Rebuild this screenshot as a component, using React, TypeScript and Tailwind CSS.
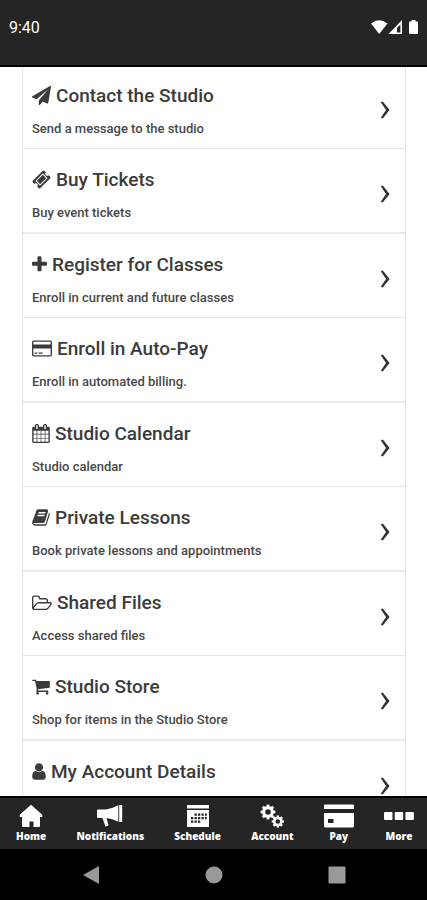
import type { ReactNode } from "react";

// --- MENU ICONS (1792 unit grid) ---
const PATHS = {
  plane:
    "M1764 11q33 24 27 64l-256 1536q-5 29-32 45-14 8-31 8-11 0-24-5l-453-185-242 295q-18 23-49 23-13 0-22-4-19-7-30.5-23.5t-11.5-36.5v-349l864-1059-1069 925-395-162q-37-14-40-55-2-40 32-59l1664-960q15-9 32-9 20 0 36 11z",
  ticket:
    "M1024 452l316 316-572 572-316-316zm-211 979l618-618q19-19 19-45t-19-45l-362-362q-18-18-45-18t-45 18l-618 618q-19 19-19 45t19 45l362 362q18 18 45 18t45-18zm889-637l-907 908q-37 37-90.5 37t-90.5-37l-126-126q56-56 56-136t-56-136-136-56-136 56l-125-126q-37-37-37-90.5t37-90.5l907-906q37-37 90.5-37t90.5 37l125 125q-56 56-56 136t56 136 136 56 136-56l126 125q37 37 37 90.5t-37 90.5z",
  plus:
    "M1600 736v192q0 40-28 68t-68 28h-416v416q0 40-28 68t-68 28h-192q-40 0-68-28t-28-68v-416h-416q-40 0-68-28t-28-68v-192q0-40 28-68t68-28h416v-416q0-40 28-68t68-28h192q40 0 68 28t28 68v416h416q40 0 68 28t28 68z",
  card:
    "M1760 128q66 0 113 47t47 113v1216q0 66-47 113t-113 47h-1600q-66 0-113-47t-47-113v-1216q0-66 47-113t113-47h1600zm-1600 128q-13 0-22.5 9.5t-9.5 22.5v224h1664v-224q0-13-9.5-22.5t-22.5-9.5h-1600zm1600 1280q13 0 22.5-9.5t9.5-22.5v-608h-1664v608q0 13 9.5 22.5t22.5 9.5h1600zm-1504-128v-128h256v128h-256zm384 0v-128h384v128h-384z",
  calendar:
    "M192 1664h288v-288h-288v288zm352 0h320v-288h-320v288zm-352-352h288v-320h-288v320zm352 0h320v-320h-320v320zm-352-384h288v-288h-288v288zm736 736h320v-288h-320v288zm-384-736h320v-288h-320v288zm768 736h288v-288h-288v288zm-384-352h320v-320h-320v320zm-352-864v-288q0-13-9.5-22.5t-22.5-9.5h-64q-13 0-22.5 9.5t-9.5 22.5v288q0 13 9.5 22.5t22.5 9.5h64q13 0 22.5-9.5t9.5-22.5zm736 864h288v-320h-288v320zm-384-384h320v-288h-320v288zm384 0h288v-288h-288v288zm32-480v-288q0-13-9.5-22.5t-22.5-9.5h-64q-13 0-22.5 9.5t-9.5 22.5v288q0 13 9.5 22.5t22.5 9.5h64q13 0 22.5-9.5t9.5-22.5zm384-64v1280q0 52-38 90t-90 38h-1408q-52 0-90-38t-38-90v-1280q0-52 38-90t90-38h128v-96q0-66 47-113t113-47h64q66 0 113 47t47 113v96h384v-96q0-66 47-113t113-47h64q66 0 113 47t47 113v96h128q52 0 90 38t38 90z",
  book:
    "M1703 478q40 57 18 129l-275 906q-19 64-76.5 107.5t-122.5 43.5h-923q-77 0-148.5-53.5t-99.5-131.5q-24-67-2-127 0-4 3-27t4-37q1-8-3-21.5t-3-19.5q2-11 8-21t16.5-23.5 16.5-23.5q23-38 45-91.5t30-91.5q3-10 .5-30t-.5-28q3-11 17-28t17-23q21-36 42-92t25-90q1-9-2.5-32t.5-28q4-13 22-30.5t22-22.5q19-26 42.5-84.5t27.5-96.5q1-8-3-25.5t-2-26.5q2-8 9-18t18-23 17-21q8-12 16.5-30.5t15-35 16-36 19.5-32 26.5-23.5 36-11.5 47.5 5.5l-1 3q38-9 51-9h761q74 0 114 56t18 130l-274 906q-36 119-71.5 153.5t-128.5 34.5h-869q-27 0-38 15-11 16-1 43 24 70 144 70h923q29 0 56-15.5t35-41.5l300-987q7-22 5-57 38 15 59 43zm-1064 2q-4 13 2 22.5t20 9.5h608q13 0 25.5-9.5t16.5-22.5l21-64q4-13-2-22.5t-20-9.5h-608q-13 0-25.5 9.5t-16.5 22.5zm-83 256q-4 13 2 22.5t20 9.5h608q13 0 25.5-9.5t16.5-22.5l21-64q4-13-2-22.5t-20-9.5h-608q-13 0-25.5 9.5t-16.5 22.5z",
  folder:
    "M1781 1017q0-35-53-35h-1088q-40 0-85.5 21.5t-71.5 52.5l-294 363q-18 24-18 40 0 35 53 35h1088q40 0 86-22t71-53l294-363q18-22 18-39zm-1141-163h768v-160q0-40-28-68t-68-28h-576q-40 0-68-28t-28-68v-64q0-40-28-68t-68-28h-320q-40 0-68 28t-28 68v853l256-315q44-53 116-87.5t140-34.5zm1269 163q0 62-46 120l-295 363q-43 53-116 87.5t-140 34.5h-1088q-92 0-158-66t-66-158v-960q0-92 66-158t158-66h320q92 0 158 66t66 158v32h544q92 0 158 66t66 158v160h192q54 0 99 24.5t67 70.5q15 32 15 68z",
  cart:
    "M704 1536q0 52-38 90t-90 38-90-38-38-90 38-90 90-38 90 38 38 90zm896 0q0 52-38 90t-90 38-90-38-38-90 38-90 90-38 90 38 38 90zm128-1088v512q0 24-16.5 42.5t-40.5 21.5l-1044 122q13 60 13 70 0 16-24 64h920q26 0 45 19t19 45-19 45-45 19h-1024q-26 0-45-19t-19-45q0-11 8-31.5t16-36 21.5-40 15.5-29.5l-177-823h-204q-26 0-45-19t-19-45 19-45 45-19h256q16 0 28.5 6.5t19.5 15.5 13 24.5 8 26 5.5 29.5 4.5 26h1201q26 0 45 19t19 45z",
  user:
    "M1536 1399q0 109-62.5 187t-150.5 78h-854q-88 0-150.5-78t-62.5-187q0-85 8.5-160.5t31.5-152 58.5-131 94-89 134.5-34.5q131 128 313 128t313-128q76 0 134.5 34.5t94 89 58.5 131 31.5 152 8.5 160.5zm-256-887q0 159-112.5 271.5t-271.5 112.5-271.5-112.5-112.5-271.5 112.5-271.5 271.5-112.5 271.5 112.5 112.5 271.5z",
};

type MenuItem = {
  icon: keyof typeof PATHS;
  box: string;
  size: string;
  title: string;
  text?: string;
};

const MENU: MenuItem[] = [
  { icon: "plane", box: "0 0 1792 1792", size: "w-[19px]", title: "Contact the Studio", text: "Send a message to the studio" },
  { icon: "ticket", box: "0 0 1792 1792", size: "w-[19px]", title: "Buy Tickets", text: "Buy event tickets" },
  { icon: "plus", box: "192 0 1408 1792", size: "w-[15px]", title: "Register for Classes", text: "Enroll in current and future classes" },
  { icon: "card", box: "0 0 1920 1792", size: "w-5", title: "Enroll in Auto-Pay", text: "Enroll in automated billing." },
  { icon: "calendar", box: "64 0 1664 1792", size: "w-[18px]", title: "Studio Calendar", text: "Studio calendar" },
  { icon: "book", box: "64 0 1664 1792", size: "w-[18px]", title: "Private Lessons", text: "Book private lessons and appointments" },
  { icon: "folder", box: "0 0 1920 1792", size: "w-5", title: "Shared Files", text: "Access shared files" },
  { icon: "cart", box: "64 0 1664 1792", size: "w-[18px]", title: "Studio Store", text: "Shop for items in the Studio Store" },
  { icon: "user", box: "256 0 1280 1792", size: "w-[14px]", title: "My Account Details" },
];

const StatusBar = () => (
  <header className="relative z-10 flex h-[67px] shrink-0 items-start justify-between border-b-2 border-black bg-[#252525] pt-[18px] pr-[7px] pl-[9px] text-white">
    <span className="text-base leading-5">9:40</span>
    <svg viewBox="0 0 50 20" className="h-5 w-[50px]" fill="currentColor" aria-hidden="true">
      <path d="M1 5.5Q9 -1 17.5 5.5L9.2 16z" />
      <path fillRule="evenodd" d="M18.5 16L32 2v14zM27 14.6h3.4V6.5L27 10z" />
      <path d="M41.5 2h4v1.5h1.5q1 0 1 1v10.5q0 1-1 1h-7q-1 0-1-1V4.5q0-1 1-1h1.5z" />
    </svg>
  </header>
);

const MenuRow = ({ item }: { item: MenuItem }) => (
  <li className="border-b border-[#e4e4e4] even:border-b-2 even:border-[#ebebeb]">
    <a href="#" className="flex items-center justify-between pt-[19px] pr-[15px] pb-[11px] pl-[9px]">
      <div className="flex flex-col gap-[13px]">
        <h2 className="flex items-center gap-[5px] text-[19px] leading-6 font-medium text-[#3b3b3b]">
          <svg viewBox={item.box} className={`mb-0.5 h-[19px] shrink-0 ${item.size}`} fill="currentColor" aria-hidden="true">
            <path d={PATHS[item.icon]} />
          </svg>
          {item.title}
        </h2>
        <p className="min-h-4 text-[13px] leading-4 font-medium text-[#484848]">{item.text}</p>
      </div>
      <svg viewBox="0 0 10 18" className="mb-0.5 h-[18px] w-[10px]" fill="#333" aria-hidden="true">
        <path d="M.8 1.2L2.8 .6 9.6 9 2.8 17.4 .8 16.8 6 9z" />
      </svg>
    </a>
  </li>
);

const Gear = ({ cx, cy, r }: { cx: number; cy: number; r: number }) => (
  <g transform={`translate(${cx} ${cy}) scale(${r})`}>
    <circle r="0.62" fill="none" stroke="currentColor" strokeWidth="0.44" />
    {[0, 45, 90, 135, 180, 225, 270, 315].map((a) => (
      <rect key={a} x="-0.2" y="-1.05" width="0.4" height="0.4" transform={`rotate(${a})`} />
    ))}
  </g>
);

const TABS: { label: string; width: string; box: string; art: ReactNode }[] = [
  {
    label: "Home",
    width: "w-6",
    box: "0 0 24 24",
    art: <path d="M12 .8L23.3 10.8V13H21V22q0 1-1 1H14.5V17.5h-4V23H4q-1 0-1-1V13H.7v-2.2z" />,
  },
  {
    label: "Notifications",
    width: "w-[26px]",
    box: "0 0 26 24",
    art: (
      <>
        <path d="M0 6.5q0-1 1-1H9Q15 4.5 21.3 1.2V17.8Q15 14.8 9.5 14L11.5 21.3 8.5 22.8 5.5 14H1q-1 0-1-1z" />
        <path d="M22.2 1h3v17h-3z" />
      </>
    ),
  },
  {
    label: "Schedule",
    width: "w-6",
    box: "0 0 24 24",
    art: (
      <>
        <path d="M1 1h22v3.5H1zM1 6h22v17H1z" />
        <path
          fill="#252525"
          d="M8.5 9.5h2.3v2.3H8.5zM12 9.5h2.3v2.3H12zM15.5 9.5h2.3v2.3h-2.3zM19 9.5h1.8v2.3H19zM5 13h2.3v2.3H5zM8.5 13h2.3v2.3H8.5zM12 13h2.3v2.3H12zM15.5 13h2.3v2.3h-2.3zM19 13h1.8v2.3H19zM5 16.5h2.3v2.3H5zM8.5 16.5h2.3v2.3H8.5zM12 16.5h2.3v2.3H12z"
        />
      </>
    ),
  },
  {
    label: "Account",
    width: "w-6",
    box: "0 0 24 24",
    art: (
      <>
        <Gear cx={8} cy={8} r={7} />
        <Gear cx={17.8} cy={17.5} r={5.8} />
      </>
    ),
  },
  {
    label: "Pay",
    width: "w-[30px]",
    box: "1 0 30 24",
    art: (
      <path
        fillRule="evenodd"
        d="M2 .5h28q1 0 1 1V5H1V1.500q0-1 1-1zM1 9h30V22q0 1.500-1.500 1.500h-27Q1 23.500 1 22zM5 15v4h5.500v-4z"
      />
    ),
  },
  {
    label: "More",
    width: "w-[30px]",
    box: "1 0 30 24",
    art: (
      <>
        <rect x="1" y="8" width="8.5" height="8" rx="1" />
        <rect x="11.7" y="8" width="8.5" height="8" rx="1" />
        <rect x="22.4" y="8" width="8.5" height="8" rx="1" />
      </>
    ),
  },
];

const TabBar = () => (
  <nav className="flex shrink-0 justify-between border-t-2 border-black bg-[#252525] pt-[6px] pr-[13px] pb-[5px] pl-4">
    {TABS.map((tab) => (
      <button key={tab.label} type="button" className="flex flex-col items-center text-white">
        <svg viewBox={tab.box} className={`h-6 ${tab.width}`} fill="currentColor" aria-hidden="true">
          {tab.art}
        </svg>
        <span className="font-['Open_Sans',sans-serif] text-[10px] leading-4 font-extrabold">{tab.label}</span>
      </button>
    ))}
  </nav>
);

const SystemBar = () => (
  <div className="grid h-[51px] shrink-0 grid-cols-3 items-center justify-items-center bg-black px-[29px] text-[#999]">
    <button type="button" aria-label="Back">
      <svg viewBox="0 0 18 18" className="size-[18px]" fill="currentColor">
        <path d="M17 0v18L1 9z" />
      </svg>
    </button>
    <button type="button" aria-label="Home screen">
      <svg viewBox="0 0 18 18" className="size-[18px]" fill="currentColor">
        <circle cx="9" cy="9" r="8.5" />
      </svg>
    </button>
    <button type="button" aria-label="Recent apps">
      <svg viewBox="0 0 18 18" className="size-[18px]" fill="currentColor">
        <rect x=".5" y=".5" width="17" height="17" rx="1" />
      </svg>
    </button>
  </div>
);

export default function App() {
  return (
    <div className="flex h-screen flex-col bg-white font-[Roboto,sans-serif]">
      <StatusBar />
      {/* The list sits slightly scrolled under the header */}
      <main className="-mt-0.5 min-h-0 flex-1 overflow-hidden pr-[21px] pl-[22px]">
        <ul className="border-x border-[#e4e4e4]">
          {MENU.map((item) => (
            <MenuRow key={item.title} item={item} />
          ))}
        </ul>
      </main>
      <TabBar />
      <SystemBar />
    </div>
  );
}
